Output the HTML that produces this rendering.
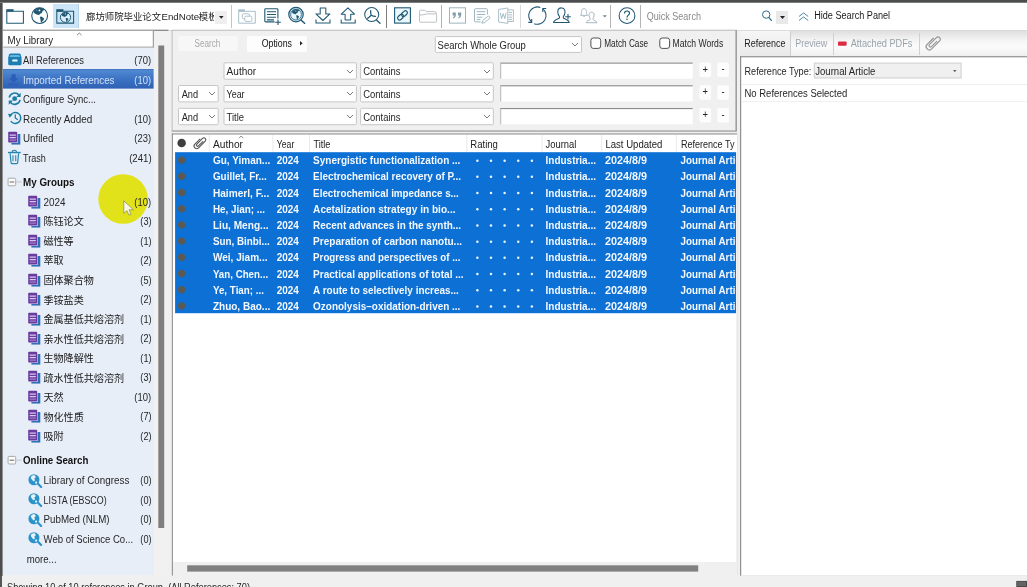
<!DOCTYPE html>
<html lang="zh-CN"><head><meta charset="utf-8"><title>EndNote</title>
<style>
html,body{margin:0;padding:0;overflow:hidden;}
body{width:1027px;height:587px;overflow:hidden;position:relative;background:#f0f0f0;font-family:"Liberation Sans","Noto Sans CJK SC",sans-serif;font-size:10.5px;color:#1a1a1a;}
div,span.t,svg{position:absolute;box-sizing:border-box;}
span.t{white-space:pre;transform-origin:0 50%;line-height:16px;height:16px;}
svg{overflow:visible;}
#app{left:0;top:0;width:1027px;height:587px;overflow:hidden;will-change:transform;}
svg.si{transform:scale(1.06);transform-origin:0 50%;}

</style></head>
<body><div id="app">
<div style="left:0px;top:0px;width:1027px;height:3px;background:linear-gradient(#4a4c4d 0,#4a4c4d 2px,#7c7e7e 2px,#7c7e7e 3px);"></div><div style="left:0px;top:3px;width:1027px;height:27px;background:#fff;"></div><div style="left:0px;top:30px;width:1027px;height:1px;background:#dcdcdc;"></div><div style="left:53px;top:4px;width:26px;height:24px;background:#cde6f7;border-right:1px solid #b4d2e8;"></div><div style="left:86px;top:8px;width:128px;height:17px;overflow:hidden;"><span class="t" style="font-size:9.4px;color:#222;left:0px;top:1px;transform:translate(0.00px,0.10px);">廊坊师院毕业论文</span><span class="t" style="font-size:9.4px;color:#222;left:75px;top:1px;transform:translate(0.50px,0.20px) scaleX(1.0306);">EndNote</span><span class="t" style="font-size:9.4px;color:#222;left:112px;top:1px;transform:translate(0.80px,0.10px);">模板</span></div><div style="left:215px;top:11px;width:12px;height:13px;background:#efefef;"></div><svg style="left:219.0px;top:15.65px" width="4.6" height="2.7" viewBox="0 0 4.6 2.7"><path d="M0 0H4.6L2.3 2.7Z" fill="#222"/></svg><div style="left:230.7px;top:5px;width:1px;height:23px;background:#c4c4c4;"></div><div style="left:385.7px;top:5px;width:1px;height:23px;background:#7d7d7d;"></div><div style="left:441.0px;top:5px;width:1px;height:23px;background:#b0b0b0;"></div><div style="left:519.7px;top:5px;width:1px;height:23px;background:#dadada;"></div><div style="left:610.1px;top:5px;width:1px;height:23px;background:#b4b4b4;"></div><div style="left:640.4px;top:5px;width:1px;height:23px;background:#b4b4b4;"></div><svg style="left:0;top:0" width="1027" height="31" viewBox="0 0 1027 31"><path d="M6.8 11.3H23.4V23.2H6.8Z" fill="#fff" stroke="#205873" stroke-width="1.05"/><path d="M6.3 9.2H13.6V11.5H6.3Z" fill="#205873"/><circle cx="39.65" cy="15.65" r="7.9" fill="#fff" stroke="#205873" stroke-width="1.1"/><g transform="translate(31.40 7.40) scale(0.9704)"><path d="M2.2 4.9C3 2.6 4.6 1.1 6.2 0.7C8 0.1 10 0.2 11.4 0.8C12.4 1.2 13.4 1.8 13.8 2.5L12.2 3.2L11.3 4.2L10.9 5.8L9.6 6.3L8.6 6.9L8 8.2L6.6 7.6L5.6 7.2L4.2 6.9L3.2 6Z" fill="#205873"/><path d="M8.6 10L10 9.5L11 9.8L12.2 10.6L13.1 11.4L12.6 12.9L11.4 14.1L10.8 15.2L10.2 15.9L9.6 14.6L9.4 13L9.2 11.6Z" fill="#205873"/><circle cx="8.3" cy="3.1" r="0.9" fill="#fff"/><circle cx="5.6" cy="2.6" r="0.5" fill="#fff" opacity="0.7"/></g><path d="M56.8 11.3H73.6V23.1H56.8Z" fill="#cde6f7" stroke="#205873" stroke-width="1.05"/><path d="M56.3 9.2H63.4V11.5H56.3Z" fill="#205873"/><circle cx="65.5" cy="17.3" r="5.1" fill="#d9ecf8" stroke="#205873" stroke-width="1"/><g transform="translate(60.17 11.97) scale(0.6272)"><path d="M2.2 4.9C3 2.6 4.6 1.1 6.2 0.7C8 0.1 10 0.2 11.4 0.8C12.4 1.2 13.4 1.8 13.8 2.5L12.2 3.2L11.3 4.2L10.9 5.8L9.6 6.3L8.6 6.9L8 8.2L6.6 7.6L5.6 7.2L4.2 6.9L3.2 6Z" fill="#205873"/><path d="M8.6 10L10 9.5L11 9.8L12.2 10.6L13.1 11.4L12.6 12.9L11.4 14.1L10.8 15.2L10.2 15.9L9.6 14.6L9.4 13L9.2 11.6Z" fill="#205873"/><circle cx="8.3" cy="3.1" r="0.9" fill="#d9ecf8"/><circle cx="5.6" cy="2.6" r="0.5" fill="#d9ecf8" opacity="0.7"/></g><path d="M238.7 11.3H255.3V23.2H238.7Z" fill="#fff" stroke="#a7bfca" stroke-width="1"/><path d="M238.2 9.3H244.9V11.5H238.2Z" fill="#a7bfca"/><rect x="242.3" y="13.8" width="7.2" height="5" rx="1.2" fill="#fff" stroke="#a7bfca" stroke-width="0.9"/><rect x="244.7" y="16.2" width="7.2" height="5.2" rx="1.2" fill="#fff" stroke="#a7bfca" stroke-width="0.9"/><path d="M277.9 18.6V9.6Q277.9 8.7 277 8.7H265.7Q264.8 8.7 264.8 9.6V21Q264.8 21.9 265.7 21.9H274.6" fill="#fff" stroke="#205873" stroke-width="1.1"/><path d="M266.9 11.7H276M266.9 14.5H276M266.9 17.2H276M266.9 19.8H274" stroke="#205873" stroke-width="1.15"/><path d="M275.2 22.3H280.8M278 19.5V25.1" stroke="#205873" stroke-width="1.1"/><circle cx="296" cy="14.6" r="7.2" fill="#d5eef8" stroke="#205873" stroke-width="1.2"/><circle cx="296" cy="14.6" r="5.4" fill="#eaf7fc" stroke="#205873" stroke-width="0.8"/><g transform="translate(290.37 8.97) scale(0.6627)"><path d="M2.2 4.9C3 2.6 4.6 1.1 6.2 0.7C8 0.1 10 0.2 11.4 0.8C12.4 1.2 13.4 1.8 13.8 2.5L12.2 3.2L11.3 4.2L10.9 5.8L9.6 6.3L8.6 6.9L8 8.2L6.6 7.6L5.6 7.2L4.2 6.9L3.2 6Z" fill="#205873"/><path d="M8.6 10L10 9.5L11 9.8L12.2 10.6L13.1 11.4L12.6 12.9L11.4 14.1L10.8 15.2L10.2 15.9L9.6 14.6L9.4 13L9.2 11.6Z" fill="#205873"/><circle cx="8.3" cy="3.1" r="0.9" fill="#eaf7fc"/><circle cx="5.6" cy="2.6" r="0.5" fill="#eaf7fc" opacity="0.7"/></g><path d="M301.2 20.3L304.6 23.3" stroke="#205873" stroke-width="1.5" stroke-linecap="round"/><path d="M320.2 8H325.8V13.9H329.9L322.9 20.5L315.9 13.9H320.2Z" fill="#fff" stroke="#205873" stroke-width="1.05" stroke-linejoin="round"/><path d="M316 19.6V22.9H330V19.6" fill="none" stroke="#205873" stroke-width="1.05"/><path d="M345.1 20V14.2H341.3L347.9 7.9L354.5 14.2H350.7V20" fill="#fff" stroke="#205873" stroke-width="1.05" stroke-linejoin="round"/><path d="M341.2 19.6V22.9H355.2V19.6" fill="none" stroke="#205873" stroke-width="1.05"/><path d="M345.1 20H350.7" stroke="#205873" stroke-width="1.05"/><circle cx="371.7" cy="14.5" r="7" fill="#fff" stroke="#205873" stroke-width="1.05"/><path d="M370.7 10.6C370.4 12.6 371 14.2 371.2 15.2C369.8 16.6 368.8 17.6 367.6 18.3M371.2 15.2C372.6 15.9 374.2 16.4 375.5 16.3" fill="none" stroke="#205873" stroke-width="1.25" stroke-linecap="round"/><path d="M376.7 20.2L380 23.3" stroke="#205873" stroke-width="1.3" stroke-linecap="round"/><rect x="394.6" y="7.8" width="15.8" height="15.3" fill="#eaf8fc" stroke="#205873" stroke-width="1.1"/><g transform="rotate(-42 402.5 15.4)" fill="none" stroke="#205873" stroke-width="1.15"><rect x="396.6" y="13.4" width="6.6" height="4" rx="2"/><rect x="401.8" y="13.4" width="6.6" height="4" rx="2"/></g><path d="M420.6 22.2Q419.5 22.2 419.5 21V11.4Q419.5 10.2 420.6 10.2H424.6Q425.4 10.2 425.9 10.9L426.4 11.6H434.8Q436.2 11.6 436.2 13V14" fill="none" stroke="#b3babd" stroke-width="0.9"/><path d="M419.6 15Q423 15 426.4 14.1Q427 13.9 428 13.9H435.4Q436.6 13.9 436.6 15.1V21Q436.6 22.2 435.4 22.2H420.6" fill="none" stroke="#b3babd" stroke-width="0.9"/><rect x="449.5" y="7.8" width="16" height="15.3" fill="#fff" stroke="#9db3bd" stroke-width="1"/><path d="M452.6 12.6H455.8V15.2Q455.8 17.6 453.4 18.6L452.8 17.6Q454.2 16.9 454.2 15.6H452.6ZM458 12.6H461.2V15.2Q461.2 17.6 458.8 18.6L458.2 17.6Q459.6 16.9 459.6 15.6H458Z" fill="#809aa8"/><path d="M487.4 14.6V9.6Q487.4 8.7 486.5 8.7H475.4Q474.5 8.7 474.5 9.6V21Q474.5 21.9 475.4 21.9H480.6" fill="#fff" stroke="#9fb6c0" stroke-width="1"/><path d="M476.8 11.7H485.2M476.8 14.5H485.2M476.8 17.2H482.4M476.8 19.6H480.4" stroke="#9fb6c0" stroke-width="1"/><path d="M481.8 23.2L482.8 20.4L487.8 16.4Q488.8 15.8 489.6 16.8Q490.4 17.8 489.4 18.6L484.6 22.6Z" fill="#fff" stroke="#9fb6c0" stroke-width="0.95" stroke-linejoin="round"/><path d="M507.4 9.9H513.4V21.5H507.4" fill="#fff" stroke="#a6bcc6" stroke-width="0.95"/><path d="M508.6 12.4H512M508.6 14.8H512M508.6 17.2H512M508.6 19.4H512" stroke="#a6bcc6" stroke-width="1"/><path d="M498.6 9.4L507.8 8V23.4L498.6 22Z" fill="#fff" stroke="#a6bcc6" stroke-width="0.95" stroke-linejoin="round"/><path d="M500.3 12.8L501.6 18.6L503.2 13.6L504.8 18.6L506.1 12.8" fill="none" stroke="#a6bcc6" stroke-width="1"/><path d="M540.3 7.4A8.7 8.7 0 0 0 531.6 22.1" fill="none" stroke="#205873" stroke-width="1.05"/><path d="M534.2 23.7A8.7 8.7 0 0 0 542.9 8.9" fill="none" stroke="#205873" stroke-width="1.05"/><path d="M528.3 22.4H531.7V18.9" fill="none" stroke="#205873" stroke-width="1.1"/><path d="M546.2 8.5H542.8V12.1" fill="none" stroke="#205873" stroke-width="1.1"/><path d="M561.4 7.9C563.6 7.9 565 9.5 565 11.9C565 13.9 564.2 15.5 563.4 16.5C563 17.3 563.4 18.1 564.4 18.5C566.8 19.5 569 20.3 569.2 22.5H553.6C553.8 20.3 556 19.5 558.4 18.5C559.4 18.1 559.8 17.3 559.4 16.5C558.6 15.5 557.8 13.9 557.8 11.9C557.8 9.5 559.2 7.9 561.4 7.9Z" fill="#fff" stroke="#205873" stroke-width="1.05"/><path d="M565.2 16.7H570.8M568 13.9V19.5" stroke="#205873" stroke-width="1.05"/><path d="M580.4 15.4C581.6 14.4 581.4 13 581.6 11.4C581.8 9.6 582.6 8.6 584 8.6C585.4 8.6 586.2 9.6 586.4 11.4C586.6 13 586.4 14.4 587.6 15.4Z" fill="#fff" stroke="#9fb3bd" stroke-width="0.9"/><path d="M583.2 16.2Q584 17 584.8 16.2" fill="none" stroke="#9fb3bd" stroke-width="0.9"/><path d="M591.6 12.2C593.2 12.2 594.2 13.4 594.2 15.2C594.2 16.6 593.6 17.8 593 18.6C592.8 19.2 593 19.8 593.8 20.1C595.4 20.8 596.8 21.3 597 22.7H586.2C586.4 21.3 587.8 20.8 589.4 20.1C590.2 19.8 590.4 19.2 590.2 18.6C589.6 17.8 589 16.6 589 15.2C589 13.4 590 12.2 591.6 12.2Z" fill="#fff" stroke="#9fb3bd" stroke-width="0.95"/><path d="M602.6 15.2H607L604.8 17.6Z" fill="#808a90"/><circle cx="627" cy="15.65" r="7.9" fill="#fff" stroke="#205873" stroke-width="1.05"/><path d="M624.5 13.4C624.5 11.8 625.6 11 627 11C628.5 11 629.5 11.9 629.5 13.2C629.5 15.1 627 15.1 627 17.4" fill="none" stroke="#205873" stroke-width="1.15"/><rect x="626.35" y="18.6" width="1.3" height="1.4" fill="#205873"/><circle cx="766.2" cy="14.6" r="3.7" fill="none" stroke="#2a6d8e" stroke-width="1"/><path d="M768.9 17.5L771.8 20.8" stroke="#2a6d8e" stroke-width="1.15"/><path d="M799 16.5L803.6 12.9L808.2 16.5M799 20.5L803.6 16.9L808.2 20.5" fill="none" stroke="#4f86a3" stroke-width="1"/></svg><span class="t" style="font-size:10.0px;color:#8a8a8a;left:646px;top:9px;transform:translate(0.80px,0.20px) scaleX(0.9012);">Quick Search</span><div style="left:776px;top:11px;width:12px;height:13px;background:#e9e9e9;"></div><svg style="left:779.5px;top:15.5px" width="5" height="3" viewBox="0 0 5 3"><path d="M0 0H5L2.5 3Z" fill="#222"/></svg><span class="t" style="font-size:10.0px;color:#1a1a1a;left:814px;top:8px;transform:translate(0.20px,0.40px) scaleX(0.9102);">Hide Search Panel</span><div style="left:2px;top:30px;width:152.5px;height:545px;background:#e7eef8;"></div><svg style="left:1px;top:28px" width="169" height="4" viewBox="1 28 169 4"><rect x="2.00" y="29.70" width="166.40" height="1.10" rx="0" fill="#7a7a7a" stroke="none" stroke-width="1"/></svg><svg style="left:2px;top:29px" width="153" height="20" viewBox="2 29 153 20"><rect x="3.20" y="30.80" width="150.60" height="16.60" rx="0" fill="#fff" stroke="none" stroke-width="1"/></svg><svg style="left:151px;top:29px" width="4" height="20" viewBox="151 29 4 20"><rect x="152.80" y="30.80" width="1.00" height="16.60" rx="0" fill="#8a8a8a" stroke="none" stroke-width="1"/></svg><svg style="left:2px;top:45px" width="153" height="4" viewBox="2 45 153 4"><rect x="3.20" y="46.60" width="150.60" height="1.00" rx="0" fill="#a0a0a0" stroke="none" stroke-width="1"/></svg><svg style="left:76.7px;top:33.1px" width="4.6" height="2.2" viewBox="0 0 4.6 2.2"><path d="M0 2.2L2.3 0L4.6 2.2" fill="none" stroke="#777" stroke-width="0.9"/></svg><span class="t" style="font-size:10.0px;color:#262626;left:7px;top:32px;transform:translate(0.50px,0.70px) scaleX(0.9767);">My Library</span><div style="left:154px;top:31px;width:14.4px;height:544px;background:#f1f1f1;"></div><svg style="left:157px;top:44px" width="9" height="485" viewBox="157 44 9 485"><rect x="158.30" y="45.50" width="5.90" height="482.50" rx="0" fill="#7f7f7f" stroke="none" stroke-width="1"/></svg><svg style="left:2px;top:68px" width="153" height="22" viewBox="2 68 153 22"><rect x="3.00" y="69.00" width="150.60" height="19.60" rx="0" fill="url(#selg)" stroke="none" stroke-width="1"/><defs><linearGradient id="selg" x1="0" y1="0" x2="0" y2="1"><stop offset="0" stop-color="#3f6fb4"/><stop offset="0.08" stop-color="#4f88d2"/><stop offset="0.5" stop-color="#3c73c5"/><stop offset="1" stop-color="#2e61b3"/></linearGradient></defs></svg><svg class="si" style="left:7.7px;top:53.1px" width="14" height="14" viewBox="0 0 14 14"><path d="M0.2 4.6L1.2 1.6Q1.5 0.8 2.4 0.8H10.6Q11.5 0.8 11.8 1.6L12.8 4.6V10.8Q12.8 11.9 11.7 11.9H1.3Q0.2 11.9 0.2 10.8Z" fill="#1c7db3"/><path d="M1.5 4.1L2.3 2.2H10.7L11.5 4.1Z" fill="#62b5df"/><rect x="4" y="6.5" width="5" height="1.9" rx="0.5" fill="#eef7fc"/></svg><span class="t" style="font-size:10.0px;color:#262626;left:23px;top:53px;transform:translate(0.00px,0.00px) scaleX(0.9380);">All References</span><span class="t" style="font-size:10.0px;color:#262626;right:875px;transform-origin:100% 50%;top:53px;transform:translate(-0.70px,0.00px) scaleX(0.9440);">(70)</span><svg class="si" style="left:7.7px;top:72.60000000000001px" width="14" height="14" viewBox="0 0 14 14"><path d="M3.4 1.6H7.2V5.4H9.6L5.3 9.4L1 5.4H3.4Z" fill="#2b5cb6"/><path d="M0.6 10.2H10.4V12.4H0.6Z" fill="#2b5cb6" opacity="0.6"/></svg><span class="t" style="font-size:10.0px;color:#d0e0f7;left:23px;top:72px;transform:translate(0.00px,0.50px) scaleX(0.9798);">Imported References</span><span class="t" style="font-size:10.0px;color:#d0e0f7;right:875px;transform-origin:100% 50%;top:72px;transform:translate(-0.70px,0.50px) scaleX(0.9440);">(10)</span><svg class="si" style="left:7.7px;top:92.10000000000001px" width="14" height="14" viewBox="0 0 14 14"><path d="M1.2 5.6A5.2 5.2 0 0 1 10.4 3.4" fill="none" stroke="#1b7ba4" stroke-width="1.5"/><path d="M11.4 7.8A5.2 5.2 0 0 1 2.2 10" fill="none" stroke="#1b7ba4" stroke-width="1.5"/><path d="M11.9 1V5.1H7.8Z" fill="#1b7ba4"/><path d="M0.7 12.4V8.3H4.8Z" fill="#1b7ba4"/><circle cx="6.3" cy="6.7" r="2.3" fill="#1b7ba4"/></svg><span class="t" style="font-size:10.0px;color:#262626;left:23px;top:92px;transform:translate(0.00px,0.00px) scaleX(0.9515);">Configure Sync...</span><svg class="si" style="left:7.7px;top:111.0px" width="14" height="14" viewBox="0 0 14 14"><path d="M2.2 4.6A5.2 5.2 0 1 1 2.6 10" fill="none" stroke="#1b7ba4" stroke-width="1.4"/><path d="M0 3L4.4 3.4L1.6 6.8Z" fill="#1b7ba4"/><path d="M6.9 3.8V7L9.2 8.6" fill="none" stroke="#1b7ba4" stroke-width="1.2"/></svg><span class="t" style="font-size:10.0px;color:#262626;left:23px;top:111px;transform:translate(0.00px,0.50px) scaleX(0.9877);">Recently Added</span><span class="t" style="font-size:10.0px;color:#262626;right:875px;transform-origin:100% 50%;top:111px;transform:translate(-0.70px,0.50px) scaleX(0.9440);">(10)</span><svg class="si" style="left:7.7px;top:130.5px" width="14" height="14" viewBox="0 0 14 14"><path d="M3.2 3.2H11.6V13.2H3.2Z" fill="#2f6fb8"/><rect x="0.2" y="1" width="8.9" height="10.7" rx="0.8" fill="#dfe6f4"/><rect x="0.2" y="1" width="8.4" height="10.2" rx="0.8" fill="#6a3a9f"/><path d="M1.6 4.3H7.4M1.6 6.7H7.4" stroke="#d9c8ee" stroke-width="1.3"/><path d="M1.6 9H7.4" stroke="#a98bd0" stroke-width="1"/></svg><span class="t" style="font-size:10.0px;color:#262626;left:23px;top:131px;transform:translate(0.00px,0.00px) scaleX(0.9762);">Unfiled</span><span class="t" style="font-size:10.0px;color:#262626;right:875px;transform-origin:100% 50%;top:131px;transform:translate(-0.70px,0.00px) scaleX(0.9440);">(23)</span><svg class="si" style="left:7.7px;top:150.0px" width="14" height="14" viewBox="0 0 14 14"><path d="M2 3.6L2.9 12.6Q3 13.2 3.6 13.2H8.4Q9 13.2 9.1 12.6L10 3.6" fill="none" stroke="#2586ad" stroke-width="1.1"/><path d="M0 2.8H12" stroke="#2586ad" stroke-width="1.3"/><path d="M4 2.6Q4 0.6 6 0.6Q8 0.6 8 2.6" fill="none" stroke="#2586ad" stroke-width="1.1"/><path d="M4.7 5.4V11M7.3 5.4V11" stroke="#2586ad" stroke-width="1"/></svg><span class="t" style="font-size:10.0px;color:#262626;left:23px;top:150px;transform:translate(0.00px,0.50px) scaleX(0.9046);">Trash</span><span class="t" style="font-size:10.0px;color:#262626;right:875px;transform-origin:100% 50%;top:150px;transform:translate(-0.70px,0.50px) scaleX(0.9632);">(241)</span><svg style="left:6px;top:176px" width="12" height="12" viewBox="6 176 12 12"><rect x="8.10" y="178.20" width="7.60" height="7.60" rx="1" fill="#fbfbfb" stroke="#a9a9a9" stroke-width="1"/></svg><svg style="left:8px;top:180px" width="8" height="4" viewBox="8 180 8 4"><rect x="9.60" y="181.50" width="4.60" height="1.00" rx="0" fill="#666" stroke="none" stroke-width="1"/></svg><svg style="left:15px;top:180px" width="8" height="4" viewBox="15 180 8 4"><rect x="16.40" y="181.50" width="5.00" height="1.00" rx="0" fill="#c0c4ca" stroke="none" stroke-width="1"/></svg><span class="t" style="font-size:10.0px;font-weight:bold;color:#111;left:23px;top:174px;transform:translate(0.00px,0.70px) scaleX(0.9840);">My Groups</span><svg style="left:97px;top:173px" width="52" height="52" viewBox="97 173 52 52"><rect x="98.30" y="174.20" width="49.60" height="49.60" rx="24.8" fill="#e2e21b" stroke="none" stroke-width="1"/></svg><svg class="si" style="left:27.7px;top:194.5px" width="14" height="14" viewBox="0 0 14 14"><path d="M3.2 3.2H11.6V13.2H3.2Z" fill="#2f6fb8"/><rect x="0.2" y="1" width="8.9" height="10.7" rx="0.8" fill="#dfe6f4"/><rect x="0.2" y="1" width="8.4" height="10.2" rx="0.8" fill="#6a3a9f"/><path d="M1.6 4.3H7.4M1.6 6.7H7.4" stroke="#d9c8ee" stroke-width="1.3"/><path d="M1.6 9H7.4" stroke="#a98bd0" stroke-width="1"/></svg><span class="t" style="font-size:10.0px;color:#262626;left:43px;top:194px;transform:translate(0.60px,0.60px) scaleX(0.9888);">2024</span><span class="t" style="font-size:10.0px;color:#262626;right:875px;transform-origin:100% 50%;top:194px;transform:translate(-0.70px,0.60px) scaleX(0.9440);">(10)</span><svg class="si" style="left:27.7px;top:214.03px" width="14" height="14" viewBox="0 0 14 14"><path d="M3.2 3.2H11.6V13.2H3.2Z" fill="#2f6fb8"/><rect x="0.2" y="1" width="8.9" height="10.7" rx="0.8" fill="#dfe6f4"/><rect x="0.2" y="1" width="8.4" height="10.2" rx="0.8" fill="#6a3a9f"/><path d="M1.6 4.3H7.4M1.6 6.7H7.4" stroke="#d9c8ee" stroke-width="1.3"/><path d="M1.6 9H7.4" stroke="#a98bd0" stroke-width="1"/></svg><span class="t" style="font-size:10.1px;color:#1a1a1a;left:43px;top:214px;transform:translate(0.40px,0.43px);">陈钰论文</span><span class="t" style="font-size:10.0px;color:#262626;right:875px;transform-origin:100% 50%;top:214px;transform:translate(-0.70px,0.13px) scaleX(0.9155);">(3)</span><svg class="si" style="left:27.7px;top:233.56px" width="14" height="14" viewBox="0 0 14 14"><path d="M3.2 3.2H11.6V13.2H3.2Z" fill="#2f6fb8"/><rect x="0.2" y="1" width="8.9" height="10.7" rx="0.8" fill="#dfe6f4"/><rect x="0.2" y="1" width="8.4" height="10.2" rx="0.8" fill="#6a3a9f"/><path d="M1.6 4.3H7.4M1.6 6.7H7.4" stroke="#d9c8ee" stroke-width="1.3"/><path d="M1.6 9H7.4" stroke="#a98bd0" stroke-width="1"/></svg><span class="t" style="font-size:10.1px;color:#1a1a1a;left:43px;top:233px;transform:translate(0.40px,0.96px);">磁性等</span><span class="t" style="font-size:10.0px;color:#262626;right:875px;transform-origin:100% 50%;top:233px;transform:translate(-0.70px,0.66px) scaleX(0.9155);">(1)</span><svg class="si" style="left:27.7px;top:253.09000000000003px" width="14" height="14" viewBox="0 0 14 14"><path d="M3.2 3.2H11.6V13.2H3.2Z" fill="#2f6fb8"/><rect x="0.2" y="1" width="8.9" height="10.7" rx="0.8" fill="#dfe6f4"/><rect x="0.2" y="1" width="8.4" height="10.2" rx="0.8" fill="#6a3a9f"/><path d="M1.6 4.3H7.4M1.6 6.7H7.4" stroke="#d9c8ee" stroke-width="1.3"/><path d="M1.6 9H7.4" stroke="#a98bd0" stroke-width="1"/></svg><span class="t" style="font-size:10.1px;color:#1a1a1a;left:43px;top:253px;transform:translate(0.40px,0.49px);">萃取</span><span class="t" style="font-size:10.0px;color:#262626;right:875px;transform-origin:100% 50%;top:253px;transform:translate(-0.70px,0.19px) scaleX(0.9155);">(2)</span><svg class="si" style="left:27.7px;top:272.62px" width="14" height="14" viewBox="0 0 14 14"><path d="M3.2 3.2H11.6V13.2H3.2Z" fill="#2f6fb8"/><rect x="0.2" y="1" width="8.9" height="10.7" rx="0.8" fill="#dfe6f4"/><rect x="0.2" y="1" width="8.4" height="10.2" rx="0.8" fill="#6a3a9f"/><path d="M1.6 4.3H7.4M1.6 6.7H7.4" stroke="#d9c8ee" stroke-width="1.3"/><path d="M1.6 9H7.4" stroke="#a98bd0" stroke-width="1"/></svg><span class="t" style="font-size:10.1px;color:#1a1a1a;left:43px;top:273px;transform:translate(0.40px,0.02px);">固体聚合物</span><span class="t" style="font-size:10.0px;color:#262626;right:875px;transform-origin:100% 50%;top:272px;transform:translate(-0.70px,0.72px) scaleX(0.9155);">(5)</span><svg class="si" style="left:27.7px;top:292.15px" width="14" height="14" viewBox="0 0 14 14"><path d="M3.2 3.2H11.6V13.2H3.2Z" fill="#2f6fb8"/><rect x="0.2" y="1" width="8.9" height="10.7" rx="0.8" fill="#dfe6f4"/><rect x="0.2" y="1" width="8.4" height="10.2" rx="0.8" fill="#6a3a9f"/><path d="M1.6 4.3H7.4M1.6 6.7H7.4" stroke="#d9c8ee" stroke-width="1.3"/><path d="M1.6 9H7.4" stroke="#a98bd0" stroke-width="1"/></svg><span class="t" style="font-size:10.1px;color:#1a1a1a;left:43px;top:292px;transform:translate(0.40px,0.55px);">季铵盐类</span><span class="t" style="font-size:10.0px;color:#262626;right:875px;transform-origin:100% 50%;top:292px;transform:translate(-0.70px,0.25px) scaleX(0.9155);">(2)</span><svg class="si" style="left:27.7px;top:311.67999999999995px" width="14" height="14" viewBox="0 0 14 14"><path d="M3.2 3.2H11.6V13.2H3.2Z" fill="#2f6fb8"/><rect x="0.2" y="1" width="8.9" height="10.7" rx="0.8" fill="#dfe6f4"/><rect x="0.2" y="1" width="8.4" height="10.2" rx="0.8" fill="#6a3a9f"/><path d="M1.6 4.3H7.4M1.6 6.7H7.4" stroke="#d9c8ee" stroke-width="1.3"/><path d="M1.6 9H7.4" stroke="#a98bd0" stroke-width="1"/></svg><span class="t" style="font-size:10.1px;color:#1a1a1a;left:43px;top:312px;transform:translate(0.40px,0.08px);">金属基低共熔溶剂</span><span class="t" style="font-size:10.0px;color:#262626;right:875px;transform-origin:100% 50%;top:311px;transform:translate(-0.70px,0.78px) scaleX(0.9155);">(1)</span><svg class="si" style="left:27.7px;top:331.2099999999999px" width="14" height="14" viewBox="0 0 14 14"><path d="M3.2 3.2H11.6V13.2H3.2Z" fill="#2f6fb8"/><rect x="0.2" y="1" width="8.9" height="10.7" rx="0.8" fill="#dfe6f4"/><rect x="0.2" y="1" width="8.4" height="10.2" rx="0.8" fill="#6a3a9f"/><path d="M1.6 4.3H7.4M1.6 6.7H7.4" stroke="#d9c8ee" stroke-width="1.3"/><path d="M1.6 9H7.4" stroke="#a98bd0" stroke-width="1"/></svg><span class="t" style="font-size:10.1px;color:#1a1a1a;left:43px;top:331px;transform:translate(0.40px,0.61px);">亲水性低共熔溶剂</span><span class="t" style="font-size:10.0px;color:#262626;right:875px;transform-origin:100% 50%;top:331px;transform:translate(-0.70px,0.31px) scaleX(0.9155);">(2)</span><svg class="si" style="left:27.7px;top:350.7399999999999px" width="14" height="14" viewBox="0 0 14 14"><path d="M3.2 3.2H11.6V13.2H3.2Z" fill="#2f6fb8"/><rect x="0.2" y="1" width="8.9" height="10.7" rx="0.8" fill="#dfe6f4"/><rect x="0.2" y="1" width="8.4" height="10.2" rx="0.8" fill="#6a3a9f"/><path d="M1.6 4.3H7.4M1.6 6.7H7.4" stroke="#d9c8ee" stroke-width="1.3"/><path d="M1.6 9H7.4" stroke="#a98bd0" stroke-width="1"/></svg><span class="t" style="font-size:10.1px;color:#1a1a1a;left:43px;top:351px;transform:translate(0.40px,0.14px);">生物降解性</span><span class="t" style="font-size:10.0px;color:#262626;right:875px;transform-origin:100% 50%;top:350px;transform:translate(-0.70px,0.84px) scaleX(0.9155);">(1)</span><svg class="si" style="left:27.7px;top:370.26999999999987px" width="14" height="14" viewBox="0 0 14 14"><path d="M3.2 3.2H11.6V13.2H3.2Z" fill="#2f6fb8"/><rect x="0.2" y="1" width="8.9" height="10.7" rx="0.8" fill="#dfe6f4"/><rect x="0.2" y="1" width="8.4" height="10.2" rx="0.8" fill="#6a3a9f"/><path d="M1.6 4.3H7.4M1.6 6.7H7.4" stroke="#d9c8ee" stroke-width="1.3"/><path d="M1.6 9H7.4" stroke="#a98bd0" stroke-width="1"/></svg><span class="t" style="font-size:10.1px;color:#1a1a1a;left:43px;top:370px;transform:translate(0.40px,0.67px);">疏水性低共熔溶剂</span><span class="t" style="font-size:10.0px;color:#262626;right:875px;transform-origin:100% 50%;top:370px;transform:translate(-0.70px,0.37px) scaleX(0.9155);">(3)</span><svg class="si" style="left:27.7px;top:389.79999999999984px" width="14" height="14" viewBox="0 0 14 14"><path d="M3.2 3.2H11.6V13.2H3.2Z" fill="#2f6fb8"/><rect x="0.2" y="1" width="8.9" height="10.7" rx="0.8" fill="#dfe6f4"/><rect x="0.2" y="1" width="8.4" height="10.2" rx="0.8" fill="#6a3a9f"/><path d="M1.6 4.3H7.4M1.6 6.7H7.4" stroke="#d9c8ee" stroke-width="1.3"/><path d="M1.6 9H7.4" stroke="#a98bd0" stroke-width="1"/></svg><span class="t" style="font-size:10.1px;color:#1a1a1a;left:43px;top:390px;transform:translate(0.40px,0.20px);">天然</span><span class="t" style="font-size:10.0px;color:#262626;right:875px;transform-origin:100% 50%;top:389px;transform:translate(-0.70px,0.90px) scaleX(0.9440);">(10)</span><svg class="si" style="left:27.7px;top:409.3299999999998px" width="14" height="14" viewBox="0 0 14 14"><path d="M3.2 3.2H11.6V13.2H3.2Z" fill="#2f6fb8"/><rect x="0.2" y="1" width="8.9" height="10.7" rx="0.8" fill="#dfe6f4"/><rect x="0.2" y="1" width="8.4" height="10.2" rx="0.8" fill="#6a3a9f"/><path d="M1.6 4.3H7.4M1.6 6.7H7.4" stroke="#d9c8ee" stroke-width="1.3"/><path d="M1.6 9H7.4" stroke="#a98bd0" stroke-width="1"/></svg><span class="t" style="font-size:10.1px;color:#1a1a1a;left:43px;top:409px;transform:translate(0.40px,0.73px);">物化性质</span><span class="t" style="font-size:10.0px;color:#262626;right:875px;transform-origin:100% 50%;top:409px;transform:translate(-0.70px,0.43px) scaleX(0.9155);">(7)</span><svg class="si" style="left:27.7px;top:428.8599999999998px" width="14" height="14" viewBox="0 0 14 14"><path d="M3.2 3.2H11.6V13.2H3.2Z" fill="#2f6fb8"/><rect x="0.2" y="1" width="8.9" height="10.7" rx="0.8" fill="#dfe6f4"/><rect x="0.2" y="1" width="8.4" height="10.2" rx="0.8" fill="#6a3a9f"/><path d="M1.6 4.3H7.4M1.6 6.7H7.4" stroke="#d9c8ee" stroke-width="1.3"/><path d="M1.6 9H7.4" stroke="#a98bd0" stroke-width="1"/></svg><span class="t" style="font-size:10.1px;color:#1a1a1a;left:43px;top:429px;transform:translate(0.40px,0.26px);">吸附</span><span class="t" style="font-size:10.0px;color:#262626;right:875px;transform-origin:100% 50%;top:428px;transform:translate(-0.70px,0.96px) scaleX(0.9155);">(2)</span><svg style="left:122.5px;top:199.5px" width="12" height="17" viewBox="0 0 12 17"><path d="M0.8 0.8V13.4L3.9 10.6L6 15.2L8 14.3L6 9.8H10.4Z" fill="#f8f8e4" stroke="#6a6a40" stroke-width="0.55" stroke-linejoin="round"/></svg><svg style="left:6px;top:454px" width="12" height="12" viewBox="6 454 12 12"><rect x="8.10" y="456.40" width="7.60" height="7.60" rx="1" fill="#fbfbfb" stroke="#a9a9a9" stroke-width="1"/></svg><svg style="left:8px;top:458px" width="8" height="4" viewBox="8 458 8 4"><rect x="9.60" y="459.70" width="4.60" height="1.00" rx="0" fill="#666" stroke="none" stroke-width="1"/></svg><svg style="left:15px;top:458px" width="8" height="4" viewBox="15 458 8 4"><rect x="16.40" y="459.70" width="5.00" height="1.00" rx="0" fill="#c0c4ca" stroke="none" stroke-width="1"/></svg><span class="t" style="font-size:10.0px;font-weight:bold;color:#111;left:23px;top:452px;transform:translate(0.00px,0.90px) scaleX(0.9725);">Online Search</span><svg class="si" style="left:27.7px;top:473.6px" width="14" height="14" viewBox="0 0 14 14"><circle cx="5.6" cy="5.8" r="5.2" fill="#2c92ca"/><path d="M2.6 3.4C3.4 2 5 1.4 6.6 1.8L7.4 3.4L6 4.4L6.6 6.2L5.4 7.4L4.2 6.2L3.2 5.2Z" fill="#e8f4fb"/><path d="M6.6 7.6L8.4 7.4L8.8 8.6L7.6 10L6.8 9Z" fill="#e8f4fb"/><path d="M9.2 9.4L12.4 12.6" stroke="#2c92ca" stroke-width="2.1" stroke-linecap="round"/></svg><span class="t" style="font-size:10.0px;color:#262626;left:43px;top:473px;transform:translate(0.60px,0.20px) scaleX(0.9821);">Library of Congress</span><span class="t" style="font-size:10.0px;color:#262626;right:875px;transform-origin:100% 50%;top:473px;transform:translate(-0.70px,0.20px) scaleX(0.9155);">(0)</span><svg class="si" style="left:27.7px;top:493.1px" width="14" height="14" viewBox="0 0 14 14"><circle cx="5.6" cy="5.8" r="5.2" fill="#2c92ca"/><path d="M2.6 3.4C3.4 2 5 1.4 6.6 1.8L7.4 3.4L6 4.4L6.6 6.2L5.4 7.4L4.2 6.2L3.2 5.2Z" fill="#e8f4fb"/><path d="M6.6 7.6L8.4 7.4L8.8 8.6L7.6 10L6.8 9Z" fill="#e8f4fb"/><path d="M9.2 9.4L12.4 12.6" stroke="#2c92ca" stroke-width="2.1" stroke-linecap="round"/></svg><span class="t" style="font-size:10.0px;color:#262626;left:43px;top:492px;transform:translate(0.60px,0.70px) scaleX(0.8879);">LISTA (EBSCO)</span><span class="t" style="font-size:10.0px;color:#262626;right:875px;transform-origin:100% 50%;top:492px;transform:translate(-0.70px,0.70px) scaleX(0.9155);">(0)</span><svg class="si" style="left:27.7px;top:512.6px" width="14" height="14" viewBox="0 0 14 14"><circle cx="5.6" cy="5.8" r="5.2" fill="#2c92ca"/><path d="M2.6 3.4C3.4 2 5 1.4 6.6 1.8L7.4 3.4L6 4.4L6.6 6.2L5.4 7.4L4.2 6.2L3.2 5.2Z" fill="#e8f4fb"/><path d="M6.6 7.6L8.4 7.4L8.8 8.6L7.6 10L6.8 9Z" fill="#e8f4fb"/><path d="M9.2 9.4L12.4 12.6" stroke="#2c92ca" stroke-width="2.1" stroke-linecap="round"/></svg><span class="t" style="font-size:10.0px;color:#262626;left:43px;top:512px;transform:translate(0.60px,0.20px) scaleX(0.9733);">PubMed (NLM)</span><span class="t" style="font-size:10.0px;color:#262626;right:875px;transform-origin:100% 50%;top:512px;transform:translate(-0.70px,0.20px) scaleX(0.9155);">(0)</span><svg class="si" style="left:27.7px;top:532.1px" width="14" height="14" viewBox="0 0 14 14"><circle cx="5.6" cy="5.8" r="5.2" fill="#2c92ca"/><path d="M2.6 3.4C3.4 2 5 1.4 6.6 1.8L7.4 3.4L6 4.4L6.6 6.2L5.4 7.4L4.2 6.2L3.2 5.2Z" fill="#e8f4fb"/><path d="M6.6 7.6L8.4 7.4L8.8 8.6L7.6 10L6.8 9Z" fill="#e8f4fb"/><path d="M9.2 9.4L12.4 12.6" stroke="#2c92ca" stroke-width="2.1" stroke-linecap="round"/></svg><span class="t" style="font-size:10.0px;color:#262626;left:43px;top:531px;transform:translate(0.60px,0.70px) scaleX(0.9547);">Web of Science Co...</span><span class="t" style="font-size:10.0px;color:#262626;right:875px;transform-origin:100% 50%;top:531px;transform:translate(-0.70px,0.70px) scaleX(0.9155);">(0)</span><span class="t" style="font-size:10.0px;color:#262626;left:26px;top:551px;transform:translate(0.80px,0.50px) scaleX(0.9574);">more...</span><svg style="left:170px;top:28px" width="568" height="105" viewBox="170 28 568 105"><rect x="172.10" y="30.20" width="564.10" height="100.90" rx="0" fill="#f0f0f0" stroke="#bcbcbc" stroke-width="1"/></svg><svg style="left:734px;top:29px" width="4" height="104" viewBox="734 29 4 104"><rect x="735.60" y="30.20" width="1.10" height="101.20" rx="0" fill="#8e8e8e" stroke="none" stroke-width="1"/></svg><svg style="left:170px;top:129px" width="568" height="4" viewBox="170 129 568 4"><rect x="171.80" y="130.50" width="564.50" height="1.10" rx="0" fill="#a4a4a4" stroke="none" stroke-width="1"/></svg><div style="left:178px;top:36px;width:59.5px;height:15px;background:#f7f7f7;border-radius:2px;"></div><span class="t" style="font-size:10.0px;color:#a8a8a8;left:194px;top:36px;transform:translate(0.60px,0.20px) scaleX(0.8142);">Search</span><div style="left:246.5px;top:36px;width:60.5px;height:15.5px;background:#fdfdfd;border-radius:2px;"></div><span class="t" style="font-size:10.0px;color:#111;left:261px;top:36px;transform:translate(0.70px,0.20px) scaleX(0.8791);">Options</span><svg style="left:299.7px;top:41.300000000000004px" width="2.6" height="4.6" viewBox="0 0 2.6 4.6"><path d="M0 0V4.6L2.6 2.3Z" fill="#222"/></svg><svg style="left:433px;top:35px" width="150" height="19" viewBox="433 35 150 19"><rect x="435.30" y="36.60" width="146.20" height="15.80" rx="1" fill="#fff" stroke="#c6c6c6" stroke-width="1"/></svg><span class="t" style="font-size:10.0px;color:#262626;left:437px;top:37px;transform:translate(0.60px,0.70px) scaleX(0.9444);">Search Whole Group</span><svg style="left:571.8000000000001px;top:43.2px" width="6" height="3" viewBox="0 0 6 3"><path d="M0 0L3.0 3L6 0" fill="none" stroke="#6a6a6a" stroke-width="0.9"/></svg><svg style="left:589px;top:36px" width="14" height="14" viewBox="589 36 14 14"><rect x="590.90" y="38.00" width="9.80" height="10.40" rx="2.4" fill="#fff" stroke="#505050" stroke-width="1"/></svg><span class="t" style="font-size:10.0px;color:#262626;left:604px;top:35px;transform:translate(0.20px,0.80px) scaleX(0.8227);">Match Case</span><svg style="left:658px;top:36px" width="14" height="14" viewBox="658 36 14 14"><rect x="659.80" y="38.00" width="9.80" height="10.40" rx="2.4" fill="#fff" stroke="#505050" stroke-width="1"/></svg><span class="t" style="font-size:10.0px;color:#262626;left:672px;top:35px;transform:translate(0.60px,0.80px) scaleX(0.8615);">Match Words</span><svg style="left:222px;top:61px" width="136" height="20" viewBox="222 61 136 20"><rect x="224.00" y="62.80" width="132.40" height="16.40" rx="1" fill="#fff" stroke="#c6c6c6" stroke-width="1"/></svg><span class="t" style="font-size:10.0px;color:#262626;left:226px;top:64px;transform:translate(0.60px,0.20px) scaleX(1.0045);">Author</span><svg style="left:346.70000000000005px;top:69.7px" width="6" height="3" viewBox="0 0 6 3"><path d="M0 0L3.0 3L6 0" fill="none" stroke="#6a6a6a" stroke-width="0.9"/></svg><svg style="left:359px;top:61px" width="136" height="20" viewBox="359 61 136 20"><rect x="360.60" y="62.80" width="132.70" height="16.40" rx="1" fill="#fff" stroke="#c6c6c6" stroke-width="1"/></svg><span class="t" style="font-size:10.0px;color:#262626;left:363px;top:64px;transform:translate(0.20px,0.20px) scaleX(0.9451);">Contains</span><svg style="left:483.6px;top:69.7px" width="6" height="3" viewBox="0 0 6 3"><path d="M0 0L3.0 3L6 0" fill="none" stroke="#6a6a6a" stroke-width="0.9"/></svg><svg style="left:499px;top:61px" width="195" height="19" viewBox="499 61 195 19"><rect x="500.20" y="62.60" width="192.50" height="16.20" rx="0" fill="#fff" stroke="none" stroke-width="1"/></svg><svg style="left:499px;top:61px" width="195" height="4" viewBox="499 61 195 4"><rect x="500.20" y="62.60" width="192.50" height="1.00" rx="0" fill="#7e7e7e" stroke="none" stroke-width="1"/></svg><svg style="left:499px;top:62px" width="4" height="18" viewBox="499 62 4 18"><rect x="500.20" y="63.60" width="1.00" height="15.20" rx="0" fill="#b4b4b4" stroke="none" stroke-width="1"/></svg><svg style="left:698px;top:61px" width="15" height="17" viewBox="698 61 15 17"><rect x="699.40" y="62.60" width="11.70" height="14.40" rx="2" fill="#fdfdfd" stroke="none" stroke-width="1"/></svg><span class="t" style="font-size:10px;color:#222;left:702px;top:61px;transform:translate(0.60px,0.60px) scaleX(0.9345);">+</span><svg style="left:716px;top:61px" width="14" height="17" viewBox="716 61 14 17"><rect x="717.20" y="62.60" width="11.70" height="14.40" rx="2" fill="#fdfdfd" stroke="none" stroke-width="1"/></svg><span class="t" style="font-size:10px;color:#222;left:721px;top:61px;transform:translate(0.60px,0.10px) scaleX(0.9345);">-</span><svg style="left:177px;top:84px" width="43" height="20" viewBox="177 84 43 20"><rect x="178.50" y="85.50" width="39.70" height="16.40" rx="1" fill="#fff" stroke="#c6c6c6" stroke-width="1"/></svg><span class="t" style="font-size:10.0px;color:#262626;left:181px;top:86px;transform:translate(0.70px,0.90px) scaleX(0.9215);">And</span><svg style="left:208.5px;top:92.4px" width="6" height="3" viewBox="0 0 6 3"><path d="M0 0L3.0 3L6 0" fill="none" stroke="#6a6a6a" stroke-width="0.9"/></svg><svg style="left:222px;top:84px" width="136" height="20" viewBox="222 84 136 20"><rect x="224.00" y="85.50" width="132.40" height="16.40" rx="1" fill="#fff" stroke="#c6c6c6" stroke-width="1"/></svg><span class="t" style="font-size:10.0px;color:#262626;left:226px;top:86px;transform:translate(0.60px,0.90px) scaleX(0.8903);">Year</span><svg style="left:346.70000000000005px;top:92.4px" width="6" height="3" viewBox="0 0 6 3"><path d="M0 0L3.0 3L6 0" fill="none" stroke="#6a6a6a" stroke-width="0.9"/></svg><svg style="left:359px;top:84px" width="136" height="20" viewBox="359 84 136 20"><rect x="360.60" y="85.50" width="132.70" height="16.40" rx="1" fill="#fff" stroke="#c6c6c6" stroke-width="1"/></svg><span class="t" style="font-size:10.0px;color:#262626;left:363px;top:86px;transform:translate(0.20px,0.90px) scaleX(0.9451);">Contains</span><svg style="left:483.6px;top:92.4px" width="6" height="3" viewBox="0 0 6 3"><path d="M0 0L3.0 3L6 0" fill="none" stroke="#6a6a6a" stroke-width="0.9"/></svg><svg style="left:499px;top:84px" width="195" height="19" viewBox="499 84 195 19"><rect x="500.20" y="85.30" width="192.50" height="16.20" rx="0" fill="#fff" stroke="none" stroke-width="1"/></svg><svg style="left:499px;top:84px" width="195" height="4" viewBox="499 84 195 4"><rect x="500.20" y="85.30" width="192.50" height="1.00" rx="0" fill="#7e7e7e" stroke="none" stroke-width="1"/></svg><svg style="left:499px;top:85px" width="4" height="18" viewBox="499 85 4 18"><rect x="500.20" y="86.30" width="1.00" height="15.20" rx="0" fill="#b4b4b4" stroke="none" stroke-width="1"/></svg><svg style="left:698px;top:84px" width="15" height="17" viewBox="698 84 15 17"><rect x="699.40" y="85.30" width="11.70" height="14.40" rx="2" fill="#fdfdfd" stroke="none" stroke-width="1"/></svg><span class="t" style="font-size:10px;color:#222;left:702px;top:84px;transform:translate(0.60px,0.30px) scaleX(0.9345);">+</span><svg style="left:716px;top:84px" width="14" height="17" viewBox="716 84 14 17"><rect x="717.20" y="85.30" width="11.70" height="14.40" rx="2" fill="#fdfdfd" stroke="none" stroke-width="1"/></svg><span class="t" style="font-size:10px;color:#222;left:721px;top:83px;transform:translate(0.60px,0.80px) scaleX(0.9345);">-</span><svg style="left:177px;top:106px" width="43" height="21" viewBox="177 106 43 21"><rect x="178.50" y="108.30" width="39.70" height="16.40" rx="1" fill="#fff" stroke="#c6c6c6" stroke-width="1"/></svg><span class="t" style="font-size:10.0px;color:#262626;left:181px;top:109px;transform:translate(0.70px,0.70px) scaleX(0.9215);">And</span><svg style="left:208.5px;top:115.2px" width="6" height="3" viewBox="0 0 6 3"><path d="M0 0L3.0 3L6 0" fill="none" stroke="#6a6a6a" stroke-width="0.9"/></svg><svg style="left:222px;top:106px" width="136" height="21" viewBox="222 106 136 21"><rect x="224.00" y="108.30" width="132.40" height="16.40" rx="1" fill="#fff" stroke="#c6c6c6" stroke-width="1"/></svg><span class="t" style="font-size:10.0px;color:#262626;left:226px;top:109px;transform:translate(0.60px,0.70px) scaleX(0.9390);">Title</span><svg style="left:346.70000000000005px;top:115.2px" width="6" height="3" viewBox="0 0 6 3"><path d="M0 0L3.0 3L6 0" fill="none" stroke="#6a6a6a" stroke-width="0.9"/></svg><svg style="left:359px;top:106px" width="136" height="21" viewBox="359 106 136 21"><rect x="360.60" y="108.30" width="132.70" height="16.40" rx="1" fill="#fff" stroke="#c6c6c6" stroke-width="1"/></svg><span class="t" style="font-size:10.0px;color:#262626;left:363px;top:109px;transform:translate(0.20px,0.70px) scaleX(0.9451);">Contains</span><svg style="left:483.6px;top:115.2px" width="6" height="3" viewBox="0 0 6 3"><path d="M0 0L3.0 3L6 0" fill="none" stroke="#6a6a6a" stroke-width="0.9"/></svg><svg style="left:499px;top:107px" width="195" height="19" viewBox="499 107 195 19"><rect x="500.20" y="108.10" width="192.50" height="16.20" rx="0" fill="#fff" stroke="none" stroke-width="1"/></svg><svg style="left:499px;top:107px" width="195" height="4" viewBox="499 107 195 4"><rect x="500.20" y="108.10" width="192.50" height="1.00" rx="0" fill="#7e7e7e" stroke="none" stroke-width="1"/></svg><svg style="left:499px;top:108px" width="4" height="18" viewBox="499 108 4 18"><rect x="500.20" y="109.10" width="1.00" height="15.20" rx="0" fill="#b4b4b4" stroke="none" stroke-width="1"/></svg><svg style="left:698px;top:107px" width="15" height="17" viewBox="698 107 15 17"><rect x="699.40" y="108.10" width="11.70" height="14.40" rx="2" fill="#fdfdfd" stroke="none" stroke-width="1"/></svg><span class="t" style="font-size:10px;color:#222;left:702px;top:107px;transform:translate(0.60px,0.10px) scaleX(0.9345);">+</span><svg style="left:716px;top:107px" width="14" height="17" viewBox="716 107 14 17"><rect x="717.20" y="108.10" width="11.70" height="14.40" rx="2" fill="#fdfdfd" stroke="none" stroke-width="1"/></svg><span class="t" style="font-size:10px;color:#222;left:721px;top:106px;transform:translate(0.60px,0.60px) scaleX(0.9345);">-</span><svg style="left:170px;top:132px" width="569" height="445" viewBox="170 132 569 445"><rect x="171.80" y="133.40" width="565.60" height="442.20" rx="0" fill="#fff" stroke="none" stroke-width="1"/></svg><svg style="left:170px;top:132px" width="569" height="4" viewBox="170 132 569 4"><rect x="171.80" y="133.40" width="565.40" height="1.10" rx="0" fill="#8f8f8f" stroke="none" stroke-width="1"/></svg><svg style="left:170px;top:132px" width="4" height="445" viewBox="170 132 4 445"><rect x="171.80" y="133.40" width="1.10" height="442.20" rx="0" fill="#8f8f8f" stroke="none" stroke-width="1"/></svg><svg style="left:735px;top:133px" width="4" height="444" viewBox="735 133 4 444"><rect x="736.60" y="134.50" width="1.00" height="441.00" rx="0" fill="#dcdcdc" stroke="none" stroke-width="1"/></svg><div style="left:173px;top:135px;width:563.5px;height:17px;background:#fff;"></div><svg style="left:207px;top:134px" width="4" height="19" viewBox="207 134 4 19"><rect x="208.80" y="135.00" width="1.00" height="17.00" rx="0" fill="#e9e9e9" stroke="none" stroke-width="1"/></svg><svg style="left:271px;top:134px" width="4" height="19" viewBox="271 134 4 19"><rect x="272.40" y="135.00" width="1.00" height="17.00" rx="0" fill="#e9e9e9" stroke="none" stroke-width="1"/></svg><svg style="left:308px;top:134px" width="3" height="19" viewBox="308 134 3 19"><rect x="309.00" y="135.00" width="1.00" height="17.00" rx="0" fill="#e9e9e9" stroke="none" stroke-width="1"/></svg><svg style="left:465px;top:134px" width="4" height="19" viewBox="465 134 4 19"><rect x="466.30" y="135.00" width="1.00" height="17.00" rx="0" fill="#e9e9e9" stroke="none" stroke-width="1"/></svg><svg style="left:540px;top:134px" width="4" height="19" viewBox="540 134 4 19"><rect x="541.50" y="135.00" width="1.00" height="17.00" rx="0" fill="#e9e9e9" stroke="none" stroke-width="1"/></svg><svg style="left:600px;top:134px" width="4" height="19" viewBox="600 134 4 19"><rect x="601.20" y="135.00" width="1.00" height="17.00" rx="0" fill="#e9e9e9" stroke="none" stroke-width="1"/></svg><svg style="left:674px;top:134px" width="4" height="19" viewBox="674 134 4 19"><rect x="675.90" y="135.00" width="1.00" height="17.00" rx="0" fill="#e9e9e9" stroke="none" stroke-width="1"/></svg><svg style="left:176px;top:137px" width="11" height="12" viewBox="176 137 11 12"><rect x="177.40" y="138.70" width="8.50" height="8.50" rx="4.25" fill="#3e3e3e" stroke="none" stroke-width="1"/></svg><svg style="left:189px;top:132px" width="20" height="20" viewBox="189 132 20 20"><g transform="translate(199.8 142.9) rotate(45) scale(1.2)"><path d="M-2.2 -2.4V3.6A2.2 2.2 0 0 0 2.2 3.6V-4.2A1.6 1.6 0 0 0 -1 -4.2V2.6A1 1 0 0 0 1 2.6V-2.6" fill="none" stroke="#505050" stroke-width="0.875" stroke-linecap="round"/></g></svg><svg style="left:239.10000000000002px;top:135.6px" width="4.4" height="2.2" viewBox="0 0 4.4 2.2"><path d="M0 2.2L2.2 0L4.4 2.2" fill="none" stroke="#777" stroke-width="0.9"/></svg><span class="t" style="font-size:10.0px;color:#222;left:213px;top:136px;transform:translate(0.00px,0.50px) scaleX(1.0180);">Author</span><span class="t" style="font-size:10.0px;color:#222;left:276px;top:136px;transform:translate(0.80px,0.50px) scaleX(0.8655);">Year</span><span class="t" style="font-size:10.0px;color:#222;left:313px;top:136px;transform:translate(0.50px,0.50px) scaleX(0.9120);">Title</span><span class="t" style="font-size:10.0px;color:#222;left:470px;top:136px;transform:translate(0.30px,0.50px) scaleX(0.9548);">Rating</span><span class="t" style="font-size:10.0px;color:#222;left:545px;top:136px;transform:translate(0.60px,0.50px) scaleX(0.9387);">Journal</span><span class="t" style="font-size:10.0px;color:#222;left:605px;top:136px;transform:translate(0.40px,0.50px) scaleX(0.9580);">Last Updated</span><span class="t" style="font-size:10.0px;color:#222;left:680px;top:136px;transform:translate(0.90px,0.50px) scaleX(0.9039);">Reference Ty</span><svg style="left:174px;top:151px" width="563" height="164" viewBox="174 151 563 164"><rect x="175.10" y="152.20" width="560.90" height="161.00" rx="0" fill="#0c70d5" stroke="none" stroke-width="1"/></svg><svg style="left:177px;top:155px" width="10" height="10" viewBox="177 155 10 10"><rect x="178.00" y="156.40" width="7.30" height="7.30" rx="3.65" fill="#5a5954" stroke="none" stroke-width="1"/></svg><span class="t" style="font-size:10.0px;font-weight:bold;color:#f4f8ff;left:212px;top:153px;transform:translate(0.90px,0.20px) scaleX(1.0009);">Gu, Yiman...</span><span class="t" style="font-size:10.0px;font-weight:bold;color:#f4f8ff;left:276px;top:153px;transform:translate(0.70px,0.20px) scaleX(0.9978);">2024</span><span class="t" style="font-size:10.0px;font-weight:bold;color:#f4f8ff;left:313px;top:153px;transform:translate(0.10px,0.20px) scaleX(1.0003);">Synergistic functionalization ...</span><svg style="left:475px;top:158px" width="5" height="5" viewBox="475 158 5 5"><rect x="476.10" y="159.40" width="2.50" height="2.50" rx="1.25" fill="#eef5ff" stroke="none" stroke-width="1"/></svg><svg style="left:488px;top:158px" width="6" height="5" viewBox="488 158 6 5"><rect x="489.73" y="159.40" width="2.50" height="2.50" rx="1.25" fill="#eef5ff" stroke="none" stroke-width="1"/></svg><svg style="left:502px;top:158px" width="5" height="5" viewBox="502 158 5 5"><rect x="503.36" y="159.40" width="2.50" height="2.50" rx="1.25" fill="#eef5ff" stroke="none" stroke-width="1"/></svg><svg style="left:515px;top:158px" width="6" height="5" viewBox="515 158 6 5"><rect x="516.99" y="159.40" width="2.50" height="2.50" rx="1.25" fill="#eef5ff" stroke="none" stroke-width="1"/></svg><svg style="left:529px;top:158px" width="6" height="5" viewBox="529 158 6 5"><rect x="530.62" y="159.40" width="2.50" height="2.50" rx="1.25" fill="#eef5ff" stroke="none" stroke-width="1"/></svg><span class="t" style="font-size:10.0px;font-weight:bold;color:#f4f8ff;left:545px;top:153px;transform:translate(0.50px,0.20px) scaleX(0.9988);">Industria...</span><span class="t" style="font-size:10.0px;font-weight:bold;color:#f4f8ff;left:605px;top:153px;transform:translate(0.10px,0.20px) scaleX(1.0787);">2024/8/9</span><div style="left:680px;top:152px;width:56px;height:16px;overflow:hidden;"><span class="t" style="font-size:10.0px;font-weight:bold;color:#f4f8ff;left:0px;top:1px;transform:translate(0.50px,0.20px) scaleX(0.9850);">Journal Article</span></div><svg style="left:177px;top:171px" width="10" height="10" viewBox="177 171 10 10"><rect x="178.00" y="172.60" width="7.30" height="7.30" rx="3.65" fill="#5a5954" stroke="none" stroke-width="1"/></svg><span class="t" style="font-size:10.0px;font-weight:bold;color:#f4f8ff;left:212px;top:169px;transform:translate(0.90px,0.40px) scaleX(0.9898);">Guillet, Fr...</span><span class="t" style="font-size:10.0px;font-weight:bold;color:#f4f8ff;left:276px;top:169px;transform:translate(0.70px,0.40px) scaleX(0.9978);">2024</span><span class="t" style="font-size:10.0px;font-weight:bold;color:#f4f8ff;left:313px;top:169px;transform:translate(0.10px,0.40px) scaleX(0.9873);">Electrochemical recovery of P...</span><svg style="left:475px;top:174px" width="5" height="6" viewBox="475 174 5 6"><rect x="476.10" y="175.60" width="2.50" height="2.50" rx="1.25" fill="#eef5ff" stroke="none" stroke-width="1"/></svg><svg style="left:488px;top:174px" width="6" height="6" viewBox="488 174 6 6"><rect x="489.73" y="175.60" width="2.50" height="2.50" rx="1.25" fill="#eef5ff" stroke="none" stroke-width="1"/></svg><svg style="left:502px;top:174px" width="5" height="6" viewBox="502 174 5 6"><rect x="503.36" y="175.60" width="2.50" height="2.50" rx="1.25" fill="#eef5ff" stroke="none" stroke-width="1"/></svg><svg style="left:515px;top:174px" width="6" height="6" viewBox="515 174 6 6"><rect x="516.99" y="175.60" width="2.50" height="2.50" rx="1.25" fill="#eef5ff" stroke="none" stroke-width="1"/></svg><svg style="left:529px;top:174px" width="6" height="6" viewBox="529 174 6 6"><rect x="530.62" y="175.60" width="2.50" height="2.50" rx="1.25" fill="#eef5ff" stroke="none" stroke-width="1"/></svg><span class="t" style="font-size:10.0px;font-weight:bold;color:#f4f8ff;left:545px;top:169px;transform:translate(0.50px,0.40px) scaleX(0.9988);">Industria...</span><span class="t" style="font-size:10.0px;font-weight:bold;color:#f4f8ff;left:605px;top:169px;transform:translate(0.10px,0.40px) scaleX(1.0787);">2024/8/9</span><div style="left:680px;top:168px;width:56px;height:16px;overflow:hidden;"><span class="t" style="font-size:10.0px;font-weight:bold;color:#f4f8ff;left:0px;top:1px;transform:translate(0.50px,0.40px) scaleX(0.9850);">Journal Article</span></div><svg style="left:177px;top:187px" width="10" height="11" viewBox="177 187 10 11"><rect x="178.00" y="188.80" width="7.30" height="7.30" rx="3.65" fill="#5a5954" stroke="none" stroke-width="1"/></svg><span class="t" style="font-size:10.0px;font-weight:bold;color:#f4f8ff;left:212px;top:185px;transform:translate(0.90px,0.60px) scaleX(1.0130);">Haimerl, F...</span><span class="t" style="font-size:10.0px;font-weight:bold;color:#f4f8ff;left:276px;top:185px;transform:translate(0.70px,0.60px) scaleX(0.9978);">2024</span><span class="t" style="font-size:10.0px;font-weight:bold;color:#f4f8ff;left:313px;top:185px;transform:translate(0.10px,0.60px) scaleX(0.9818);">Electrochemical impedance s...</span><svg style="left:475px;top:190px" width="5" height="6" viewBox="475 190 5 6"><rect x="476.10" y="191.80" width="2.50" height="2.50" rx="1.25" fill="#eef5ff" stroke="none" stroke-width="1"/></svg><svg style="left:488px;top:190px" width="6" height="6" viewBox="488 190 6 6"><rect x="489.73" y="191.80" width="2.50" height="2.50" rx="1.25" fill="#eef5ff" stroke="none" stroke-width="1"/></svg><svg style="left:502px;top:190px" width="5" height="6" viewBox="502 190 5 6"><rect x="503.36" y="191.80" width="2.50" height="2.50" rx="1.25" fill="#eef5ff" stroke="none" stroke-width="1"/></svg><svg style="left:515px;top:190px" width="6" height="6" viewBox="515 190 6 6"><rect x="516.99" y="191.80" width="2.50" height="2.50" rx="1.25" fill="#eef5ff" stroke="none" stroke-width="1"/></svg><svg style="left:529px;top:190px" width="6" height="6" viewBox="529 190 6 6"><rect x="530.62" y="191.80" width="2.50" height="2.50" rx="1.25" fill="#eef5ff" stroke="none" stroke-width="1"/></svg><span class="t" style="font-size:10.0px;font-weight:bold;color:#f4f8ff;left:545px;top:185px;transform:translate(0.50px,0.60px) scaleX(0.9988);">Industria...</span><span class="t" style="font-size:10.0px;font-weight:bold;color:#f4f8ff;left:605px;top:185px;transform:translate(0.10px,0.60px) scaleX(1.0787);">2024/8/9</span><div style="left:680px;top:184px;width:56px;height:16px;overflow:hidden;"><span class="t" style="font-size:10.0px;font-weight:bold;color:#f4f8ff;left:0px;top:1px;transform:translate(0.50px,0.60px) scaleX(0.9850);">Journal Article</span></div><svg style="left:177px;top:203px" width="10" height="11" viewBox="177 203 10 11"><rect x="178.00" y="205.00" width="7.30" height="7.30" rx="3.65" fill="#5a5954" stroke="none" stroke-width="1"/></svg><span class="t" style="font-size:10.0px;font-weight:bold;color:#f4f8ff;left:212px;top:201px;transform:translate(0.90px,0.80px) scaleX(0.9887);">He, Jian; ...</span><span class="t" style="font-size:10.0px;font-weight:bold;color:#f4f8ff;left:276px;top:201px;transform:translate(0.70px,0.80px) scaleX(0.9978);">2024</span><span class="t" style="font-size:10.0px;font-weight:bold;color:#f4f8ff;left:313px;top:201px;transform:translate(0.10px,0.80px) scaleX(1.0089);">Acetalization strategy in bio...</span><svg style="left:475px;top:206px" width="5" height="6" viewBox="475 206 5 6"><rect x="476.10" y="208.00" width="2.50" height="2.50" rx="1.25" fill="#eef5ff" stroke="none" stroke-width="1"/></svg><svg style="left:488px;top:206px" width="6" height="6" viewBox="488 206 6 6"><rect x="489.73" y="208.00" width="2.50" height="2.50" rx="1.25" fill="#eef5ff" stroke="none" stroke-width="1"/></svg><svg style="left:502px;top:206px" width="5" height="6" viewBox="502 206 5 6"><rect x="503.36" y="208.00" width="2.50" height="2.50" rx="1.25" fill="#eef5ff" stroke="none" stroke-width="1"/></svg><svg style="left:515px;top:206px" width="6" height="6" viewBox="515 206 6 6"><rect x="516.99" y="208.00" width="2.50" height="2.50" rx="1.25" fill="#eef5ff" stroke="none" stroke-width="1"/></svg><svg style="left:529px;top:206px" width="6" height="6" viewBox="529 206 6 6"><rect x="530.62" y="208.00" width="2.50" height="2.50" rx="1.25" fill="#eef5ff" stroke="none" stroke-width="1"/></svg><span class="t" style="font-size:10.0px;font-weight:bold;color:#f4f8ff;left:545px;top:201px;transform:translate(0.50px,0.80px) scaleX(0.9988);">Industria...</span><span class="t" style="font-size:10.0px;font-weight:bold;color:#f4f8ff;left:605px;top:201px;transform:translate(0.10px,0.80px) scaleX(1.0787);">2024/8/9</span><div style="left:680px;top:201px;width:56px;height:16px;overflow:hidden;"><span class="t" style="font-size:10.0px;font-weight:bold;color:#f4f8ff;left:0px;top:0px;transform:translate(0.50px,0.80px) scaleX(0.9850);">Journal Article</span></div><svg style="left:177px;top:220px" width="10" height="10" viewBox="177 220 10 10"><rect x="178.00" y="221.20" width="7.30" height="7.30" rx="3.65" fill="#5a5954" stroke="none" stroke-width="1"/></svg><span class="t" style="font-size:10.0px;font-weight:bold;color:#f4f8ff;left:212px;top:217px;transform:translate(0.90px,1.00px) scaleX(1.0109);">Liu, Meng...</span><span class="t" style="font-size:10.0px;font-weight:bold;color:#f4f8ff;left:276px;top:217px;transform:translate(0.70px,1.00px) scaleX(0.9978);">2024</span><span class="t" style="font-size:10.0px;font-weight:bold;color:#f4f8ff;left:313px;top:217px;transform:translate(0.10px,1.00px) scaleX(0.9937);">Recent advances in the synth...</span><svg style="left:475px;top:223px" width="5" height="5" viewBox="475 223 5 5"><rect x="476.10" y="224.20" width="2.50" height="2.50" rx="1.25" fill="#eef5ff" stroke="none" stroke-width="1"/></svg><svg style="left:488px;top:223px" width="6" height="5" viewBox="488 223 6 5"><rect x="489.73" y="224.20" width="2.50" height="2.50" rx="1.25" fill="#eef5ff" stroke="none" stroke-width="1"/></svg><svg style="left:502px;top:223px" width="5" height="5" viewBox="502 223 5 5"><rect x="503.36" y="224.20" width="2.50" height="2.50" rx="1.25" fill="#eef5ff" stroke="none" stroke-width="1"/></svg><svg style="left:515px;top:223px" width="6" height="5" viewBox="515 223 6 5"><rect x="516.99" y="224.20" width="2.50" height="2.50" rx="1.25" fill="#eef5ff" stroke="none" stroke-width="1"/></svg><svg style="left:529px;top:223px" width="6" height="5" viewBox="529 223 6 5"><rect x="530.62" y="224.20" width="2.50" height="2.50" rx="1.25" fill="#eef5ff" stroke="none" stroke-width="1"/></svg><span class="t" style="font-size:10.0px;font-weight:bold;color:#f4f8ff;left:545px;top:217px;transform:translate(0.50px,1.00px) scaleX(0.9988);">Industria...</span><span class="t" style="font-size:10.0px;font-weight:bold;color:#f4f8ff;left:605px;top:217px;transform:translate(0.10px,1.00px) scaleX(1.0787);">2024/8/9</span><div style="left:680px;top:217px;width:56px;height:16px;overflow:hidden;"><span class="t" style="font-size:10.0px;font-weight:bold;color:#f4f8ff;left:0px;top:0px;transform:translate(0.50px,1.00px) scaleX(0.9850);">Journal Article</span></div><svg style="left:177px;top:236px" width="10" height="10" viewBox="177 236 10 10"><rect x="178.00" y="237.40" width="7.30" height="7.30" rx="3.65" fill="#5a5954" stroke="none" stroke-width="1"/></svg><span class="t" style="font-size:10.0px;font-weight:bold;color:#f4f8ff;left:212px;top:234px;transform:translate(0.90px,0.20px) scaleX(0.9847);">Sun, Binbi...</span><span class="t" style="font-size:10.0px;font-weight:bold;color:#f4f8ff;left:276px;top:234px;transform:translate(0.70px,0.20px) scaleX(0.9978);">2024</span><span class="t" style="font-size:10.0px;font-weight:bold;color:#f4f8ff;left:313px;top:234px;transform:translate(0.10px,0.20px) scaleX(1.0036);">Preparation of carbon nanotu...</span><svg style="left:475px;top:239px" width="5" height="5" viewBox="475 239 5 5"><rect x="476.10" y="240.40" width="2.50" height="2.50" rx="1.25" fill="#eef5ff" stroke="none" stroke-width="1"/></svg><svg style="left:488px;top:239px" width="6" height="5" viewBox="488 239 6 5"><rect x="489.73" y="240.40" width="2.50" height="2.50" rx="1.25" fill="#eef5ff" stroke="none" stroke-width="1"/></svg><svg style="left:502px;top:239px" width="5" height="5" viewBox="502 239 5 5"><rect x="503.36" y="240.40" width="2.50" height="2.50" rx="1.25" fill="#eef5ff" stroke="none" stroke-width="1"/></svg><svg style="left:515px;top:239px" width="6" height="5" viewBox="515 239 6 5"><rect x="516.99" y="240.40" width="2.50" height="2.50" rx="1.25" fill="#eef5ff" stroke="none" stroke-width="1"/></svg><svg style="left:529px;top:239px" width="6" height="5" viewBox="529 239 6 5"><rect x="530.62" y="240.40" width="2.50" height="2.50" rx="1.25" fill="#eef5ff" stroke="none" stroke-width="1"/></svg><span class="t" style="font-size:10.0px;font-weight:bold;color:#f4f8ff;left:545px;top:234px;transform:translate(0.50px,0.20px) scaleX(0.9988);">Industria...</span><span class="t" style="font-size:10.0px;font-weight:bold;color:#f4f8ff;left:605px;top:234px;transform:translate(0.10px,0.20px) scaleX(1.0787);">2024/8/9</span><div style="left:680px;top:233px;width:56px;height:16px;overflow:hidden;"><span class="t" style="font-size:10.0px;font-weight:bold;color:#f4f8ff;left:0px;top:1px;transform:translate(0.50px,0.20px) scaleX(0.9850);">Journal Article</span></div><svg style="left:177px;top:252px" width="10" height="10" viewBox="177 252 10 10"><rect x="178.00" y="253.60" width="7.30" height="7.30" rx="3.65" fill="#5a5954" stroke="none" stroke-width="1"/></svg><span class="t" style="font-size:10.0px;font-weight:bold;color:#f4f8ff;left:212px;top:250px;transform:translate(0.90px,0.40px) scaleX(1.0056);">Wei, Jiam...</span><span class="t" style="font-size:10.0px;font-weight:bold;color:#f4f8ff;left:276px;top:250px;transform:translate(0.70px,0.40px) scaleX(0.9978);">2024</span><span class="t" style="font-size:10.0px;font-weight:bold;color:#f4f8ff;left:313px;top:250px;transform:translate(0.10px,0.40px) scaleX(0.9744);">Progress and perspectives of ...</span><svg style="left:475px;top:255px" width="5" height="6" viewBox="475 255 5 6"><rect x="476.10" y="256.60" width="2.50" height="2.50" rx="1.25" fill="#eef5ff" stroke="none" stroke-width="1"/></svg><svg style="left:488px;top:255px" width="6" height="6" viewBox="488 255 6 6"><rect x="489.73" y="256.60" width="2.50" height="2.50" rx="1.25" fill="#eef5ff" stroke="none" stroke-width="1"/></svg><svg style="left:502px;top:255px" width="5" height="6" viewBox="502 255 5 6"><rect x="503.36" y="256.60" width="2.50" height="2.50" rx="1.25" fill="#eef5ff" stroke="none" stroke-width="1"/></svg><svg style="left:515px;top:255px" width="6" height="6" viewBox="515 255 6 6"><rect x="516.99" y="256.60" width="2.50" height="2.50" rx="1.25" fill="#eef5ff" stroke="none" stroke-width="1"/></svg><svg style="left:529px;top:255px" width="6" height="6" viewBox="529 255 6 6"><rect x="530.62" y="256.60" width="2.50" height="2.50" rx="1.25" fill="#eef5ff" stroke="none" stroke-width="1"/></svg><span class="t" style="font-size:10.0px;font-weight:bold;color:#f4f8ff;left:545px;top:250px;transform:translate(0.50px,0.40px) scaleX(0.9988);">Industria...</span><span class="t" style="font-size:10.0px;font-weight:bold;color:#f4f8ff;left:605px;top:250px;transform:translate(0.10px,0.40px) scaleX(1.0787);">2024/8/9</span><div style="left:680px;top:249px;width:56px;height:16px;overflow:hidden;"><span class="t" style="font-size:10.0px;font-weight:bold;color:#f4f8ff;left:0px;top:1px;transform:translate(0.50px,0.40px) scaleX(0.9850);">Journal Article</span></div><svg style="left:177px;top:268px" width="10" height="11" viewBox="177 268 10 11"><rect x="178.00" y="269.80" width="7.30" height="7.30" rx="3.65" fill="#5a5954" stroke="none" stroke-width="1"/></svg><span class="t" style="font-size:10.0px;font-weight:bold;color:#f4f8ff;left:212px;top:266px;transform:translate(0.90px,0.60px) scaleX(0.9738);">Yan, Chen...</span><span class="t" style="font-size:10.0px;font-weight:bold;color:#f4f8ff;left:276px;top:266px;transform:translate(0.70px,0.60px) scaleX(0.9978);">2024</span><span class="t" style="font-size:10.0px;font-weight:bold;color:#f4f8ff;left:313px;top:266px;transform:translate(0.10px,0.60px) scaleX(1.0030);">Practical applications of total ...</span><svg style="left:475px;top:271px" width="5" height="6" viewBox="475 271 5 6"><rect x="476.10" y="272.80" width="2.50" height="2.50" rx="1.25" fill="#eef5ff" stroke="none" stroke-width="1"/></svg><svg style="left:488px;top:271px" width="6" height="6" viewBox="488 271 6 6"><rect x="489.73" y="272.80" width="2.50" height="2.50" rx="1.25" fill="#eef5ff" stroke="none" stroke-width="1"/></svg><svg style="left:502px;top:271px" width="5" height="6" viewBox="502 271 5 6"><rect x="503.36" y="272.80" width="2.50" height="2.50" rx="1.25" fill="#eef5ff" stroke="none" stroke-width="1"/></svg><svg style="left:515px;top:271px" width="6" height="6" viewBox="515 271 6 6"><rect x="516.99" y="272.80" width="2.50" height="2.50" rx="1.25" fill="#eef5ff" stroke="none" stroke-width="1"/></svg><svg style="left:529px;top:271px" width="6" height="6" viewBox="529 271 6 6"><rect x="530.62" y="272.80" width="2.50" height="2.50" rx="1.25" fill="#eef5ff" stroke="none" stroke-width="1"/></svg><span class="t" style="font-size:10.0px;font-weight:bold;color:#f4f8ff;left:545px;top:266px;transform:translate(0.50px,0.60px) scaleX(0.9988);">Industria...</span><span class="t" style="font-size:10.0px;font-weight:bold;color:#f4f8ff;left:605px;top:266px;transform:translate(0.10px,0.60px) scaleX(1.0787);">2024/8/9</span><div style="left:680px;top:265px;width:56px;height:16px;overflow:hidden;"><span class="t" style="font-size:10.0px;font-weight:bold;color:#f4f8ff;left:0px;top:1px;transform:translate(0.50px,0.60px) scaleX(0.9850);">Journal Article</span></div><svg style="left:177px;top:284px" width="10" height="11" viewBox="177 284 10 11"><rect x="178.00" y="286.00" width="7.30" height="7.30" rx="3.65" fill="#5a5954" stroke="none" stroke-width="1"/></svg><span class="t" style="font-size:10.0px;font-weight:bold;color:#f4f8ff;left:212px;top:282px;transform:translate(0.90px,0.80px) scaleX(0.9815);">Ye, Tian; ...</span><span class="t" style="font-size:10.0px;font-weight:bold;color:#f4f8ff;left:276px;top:282px;transform:translate(0.70px,0.80px) scaleX(0.9978);">2024</span><span class="t" style="font-size:10.0px;font-weight:bold;color:#f4f8ff;left:313px;top:282px;transform:translate(0.10px,0.80px) scaleX(0.9955);">A route to selectively increas...</span><svg style="left:475px;top:287px" width="5" height="6" viewBox="475 287 5 6"><rect x="476.10" y="289.00" width="2.50" height="2.50" rx="1.25" fill="#eef5ff" stroke="none" stroke-width="1"/></svg><svg style="left:488px;top:287px" width="6" height="6" viewBox="488 287 6 6"><rect x="489.73" y="289.00" width="2.50" height="2.50" rx="1.25" fill="#eef5ff" stroke="none" stroke-width="1"/></svg><svg style="left:502px;top:287px" width="5" height="6" viewBox="502 287 5 6"><rect x="503.36" y="289.00" width="2.50" height="2.50" rx="1.25" fill="#eef5ff" stroke="none" stroke-width="1"/></svg><svg style="left:515px;top:287px" width="6" height="6" viewBox="515 287 6 6"><rect x="516.99" y="289.00" width="2.50" height="2.50" rx="1.25" fill="#eef5ff" stroke="none" stroke-width="1"/></svg><svg style="left:529px;top:287px" width="6" height="6" viewBox="529 287 6 6"><rect x="530.62" y="289.00" width="2.50" height="2.50" rx="1.25" fill="#eef5ff" stroke="none" stroke-width="1"/></svg><span class="t" style="font-size:10.0px;font-weight:bold;color:#f4f8ff;left:545px;top:282px;transform:translate(0.50px,0.80px) scaleX(0.9988);">Industria...</span><span class="t" style="font-size:10.0px;font-weight:bold;color:#f4f8ff;left:605px;top:282px;transform:translate(0.10px,0.80px) scaleX(1.0787);">2024/8/9</span><div style="left:680px;top:282px;width:56px;height:16px;overflow:hidden;"><span class="t" style="font-size:10.0px;font-weight:bold;color:#f4f8ff;left:0px;top:0px;transform:translate(0.50px,0.80px) scaleX(0.9850);">Journal Article</span></div><svg style="left:177px;top:301px" width="10" height="10" viewBox="177 301 10 10"><rect x="178.00" y="302.20" width="7.30" height="7.30" rx="3.65" fill="#5a5954" stroke="none" stroke-width="1"/></svg><span class="t" style="font-size:10.0px;font-weight:bold;color:#f4f8ff;left:212px;top:298px;transform:translate(0.90px,1.00px) scaleX(1.0014);">Zhuo, Bao...</span><span class="t" style="font-size:10.0px;font-weight:bold;color:#f4f8ff;left:276px;top:298px;transform:translate(0.70px,1.00px) scaleX(0.9978);">2024</span><span class="t" style="font-size:10.0px;font-weight:bold;color:#f4f8ff;left:313px;top:298px;transform:translate(0.10px,1.00px) scaleX(0.9965);">Ozonolysis–oxidation-driven ...</span><svg style="left:475px;top:304px" width="5" height="5" viewBox="475 304 5 5"><rect x="476.10" y="305.20" width="2.50" height="2.50" rx="1.25" fill="#eef5ff" stroke="none" stroke-width="1"/></svg><svg style="left:488px;top:304px" width="6" height="5" viewBox="488 304 6 5"><rect x="489.73" y="305.20" width="2.50" height="2.50" rx="1.25" fill="#eef5ff" stroke="none" stroke-width="1"/></svg><svg style="left:502px;top:304px" width="5" height="5" viewBox="502 304 5 5"><rect x="503.36" y="305.20" width="2.50" height="2.50" rx="1.25" fill="#eef5ff" stroke="none" stroke-width="1"/></svg><svg style="left:515px;top:304px" width="6" height="5" viewBox="515 304 6 5"><rect x="516.99" y="305.20" width="2.50" height="2.50" rx="1.25" fill="#eef5ff" stroke="none" stroke-width="1"/></svg><svg style="left:529px;top:304px" width="6" height="5" viewBox="529 304 6 5"><rect x="530.62" y="305.20" width="2.50" height="2.50" rx="1.25" fill="#eef5ff" stroke="none" stroke-width="1"/></svg><span class="t" style="font-size:10.0px;font-weight:bold;color:#f4f8ff;left:545px;top:298px;transform:translate(0.50px,1.00px) scaleX(0.9988);">Industria...</span><span class="t" style="font-size:10.0px;font-weight:bold;color:#f4f8ff;left:605px;top:298px;transform:translate(0.10px,1.00px) scaleX(1.0787);">2024/8/9</span><div style="left:680px;top:298px;width:56px;height:16px;overflow:hidden;"><span class="t" style="font-size:10.0px;font-weight:bold;color:#f4f8ff;left:0px;top:0px;transform:translate(0.50px,1.00px) scaleX(0.9850);">Journal Article</span></div><div style="left:173px;top:562px;width:563.5px;height:14px;background:#f0f0f0;"></div><svg style="left:186px;top:564px" width="514" height="9" viewBox="186 564 514 9"><rect x="187.20" y="565.30" width="511.00" height="6.30" rx="0" fill="#808080" stroke="none" stroke-width="1"/></svg><div style="left:740px;top:31px;width:287px;height:26px;background:linear-gradient(#dedfde 0,#f3f4f3 35%,#fbfbfb 60%,#eeeeee 100%);"></div><div style="left:740px;top:31px;width:51px;height:26px;background:linear-gradient(#f6f6f6,#e9e9e9);border-right:1px solid #cfcfcf;"></div><svg style="left:739px;top:55px" width="290" height="522" viewBox="739 55 290 522"><rect x="740.10" y="56.20" width="287.00" height="519.60" rx="0" fill="#fff" stroke="none" stroke-width="1"/></svg><svg style="left:739px;top:55px" width="290" height="4" viewBox="739 55 290 4"><rect x="740.10" y="56.20" width="287.00" height="1.10" rx="0" fill="#858585" stroke="none" stroke-width="1"/></svg><svg style="left:739px;top:55px" width="4" height="522" viewBox="739 55 4 522"><rect x="740.10" y="56.20" width="1.10" height="519.60" rx="0" fill="#858585" stroke="none" stroke-width="1"/></svg><svg style="left:739px;top:574px" width="290" height="4" viewBox="739 574 290 4"><rect x="740.10" y="575.70" width="287.00" height="1.00" rx="0" fill="#c2c2c2" stroke="none" stroke-width="1"/></svg><div style="left:833px;top:33px;width:1px;height:22px;background:#d0d0d0;"></div><div style="left:919px;top:33px;width:1px;height:22px;background:#d0d0d0;"></div><span class="t" style="font-size:10.0px;color:#222;left:744px;top:35px;transform:translate(0.20px,0.80px) scaleX(0.8951);">Reference</span><span class="t" style="font-size:10.0px;color:#9ca4ad;left:795px;top:35px;transform:translate(0.20px,0.80px) scaleX(0.8994);">Preview</span><svg style="left:837px;top:40px" width="11" height="7" viewBox="837 40 11 7"><rect x="838.00" y="41.40" width="8.60" height="4.30" rx="0.8" fill="#dc2c44" stroke="none" stroke-width="1"/></svg><span class="t" style="font-size:10.0px;color:#97a3a8;left:850px;top:35px;transform:translate(0.70px,0.80px) scaleX(0.9173);">Attached PDFs</span><svg style="left:923px;top:33px" width="20" height="20" viewBox="923 33 20 20"><g transform="translate(933.1 43) rotate(45) scale(1.45)"><path d="M-2.2 -2.4V3.6A2.2 2.2 0 0 0 2.2 3.6V-4.2A1.6 1.6 0 0 0 -1 -4.2V2.6A1 1 0 0 0 1 2.6V-2.6" fill="none" stroke="#959595" stroke-width="0.828" stroke-linecap="round"/></g></svg><span class="t" style="font-size:10.0px;color:#262626;left:744px;top:63px;transform:translate(0.50px,0.90px) scaleX(0.9125);">Reference Type:</span><svg style="left:812px;top:61px" width="151" height="19" viewBox="812 61 151 19"><rect x="814.30" y="63.10" width="146.80" height="14.90" rx="0" fill="#f0f0f0" stroke="#cdcdcd" stroke-width="1"/></svg><span class="t" style="font-size:10.0px;color:#262626;left:815px;top:63px;transform:translate(0.20px,0.90px) scaleX(0.9584);">Journal Article</span><svg style="left:952.8000000000001px;top:70.10000000000001px" width="3.6" height="2.2" viewBox="0 0 3.6 2.2"><path d="M0 0H3.6L1.8 2.2Z" fill="#666"/></svg><div style="left:742px;top:84px;width:285px;height:1px;background:#eeeeee;"></div><span class="t" style="font-size:10.0px;color:#262626;left:744px;top:86px;transform:translate(0.50px,0.30px) scaleX(0.9483);">No References Selected</span><div style="left:742px;top:100.5px;width:285px;height:1px;background:#f1f1f1;"></div><div style="left:0px;top:575.5px;width:1027px;height:11.5px;background:#f0f0f0;"></div><div style="left:0px;top:3px;width:3px;height:572.5px;background:linear-gradient(90deg,#4c4e4d 0,#4c4e4d 2px,#8e9092 2px,#8e9092 3px);"></div><div style="left:0px;top:575.5px;width:2px;height:11.5px;background:#555756;"></div><span class="t" style="font-size:10.0px;color:#262626;left:7px;top:579px;transform:translate(0.00px,0.90px) scaleX(0.9262);">Showing 10 of 10 references in Group. (All References: 70)</span><svg style="left:1015px;top:579px" width="13" height="9" viewBox="1015 579 13 9"><rect x="1016.80" y="581.40" width="9.70" height="5.10" rx="0" fill="#636564" stroke="#4a4c4b" stroke-width="1"/></svg>
</div></body></html>
